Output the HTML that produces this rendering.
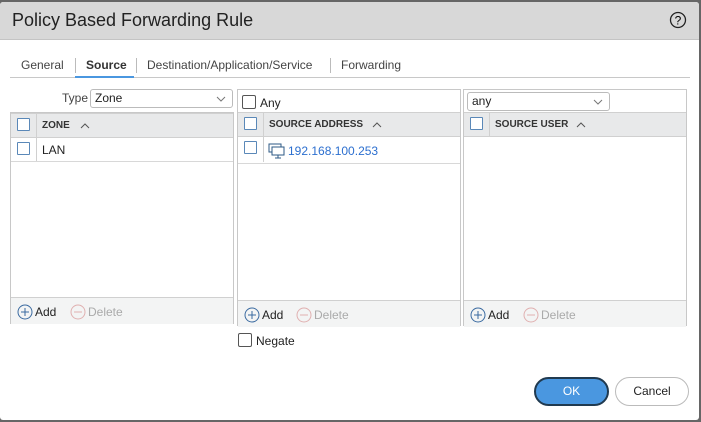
<!DOCTYPE html>
<html><head><style>
*{box-sizing:border-box;margin:0;padding:0}
body{width:701px;height:422px;background:#666;font-family:"Liberation Sans",sans-serif;position:relative;overflow:hidden;font-size:12px;color:#222}
.a{position:absolute}
.dlg{left:0;top:2px;width:699px;height:418px;background:#fff;border-radius:3px;overflow:hidden}
.tb{left:0;top:0;width:699px;height:38px;background:#d8d8d8;border-bottom:1px solid #c4c4c4}
.panel{border:1px solid #c8c8c8;background:#fff}
.hdr{background:#e8e9ea;border-bottom:1px solid #d0d0d0;border-top:1px solid #d0d0d0;height:25px}
.cb{width:13px;height:13px;border:1.5px solid #5a88b8;border-radius:1px;background:#fff}
.cbg{width:14px;height:14px;border:1px solid #555;border-radius:2px;background:#fff}
.ht{font-size:10px;font-weight:bold;letter-spacing:0px;color:#333;white-space:nowrap}
.ft{background:#f3f4f4;border-top:1px solid #d0d0d0;height:27px}
.sel{border:1px solid #bbb;border-radius:3px;background:#fff;height:19px;padding-left:4px;line-height:17px;font-size:12px}
.chev{position:absolute;right:6px;top:6px}
</style></head><body>
<div class="a dlg">
<div class="a tb"></div>
<div class="a" style="left:12px;top:8px;font-size:18px;color:#222">Policy Based Forwarding Rule</div>
<svg class="a" style="left:669px;top:9px" width="18" height="18"><circle cx="9" cy="9" r="7.5" fill="none" stroke="#222" stroke-width="1.3"/><text x="9" y="13.5" font-size="12" text-anchor="middle" font-family="Liberation Sans">?</text></svg>

<div class="a" style="left:10px;top:75px;width:680px;height:1px;background:#c8c8c8"></div>
<div class="a" style="left:75px;top:74px;width:59px;height:2px;background:#4a97e0"></div>
<div class="a" style="left:21px;top:56px;color:#444">General</div>
<div class="a" style="left:75px;top:56px;width:1px;height:15px;background:#bbb"></div>
<div class="a" style="left:86px;top:56px;font-weight:bold;color:#333">Source</div>
<div class="a" style="left:136px;top:56px;width:1px;height:15px;background:#bbb"></div>
<div class="a" style="left:147px;top:56px;color:#444">Destination/Application/Service</div>
<div class="a" style="left:330px;top:56px;width:1px;height:15px;background:#bbb"></div>
<div class="a" style="left:341px;top:56px;color:#444">Forwarding</div>

<!-- panel 1 -->
<div class="a" style="left:62px;top:89px;color:#444">Type</div>
<div class="a sel" style="left:90px;top:87px;width:143px">Zone<svg class="chev" width="10" height="6"><path d="M1 1l4 4 4-4" fill="none" stroke="#777"/></svg></div>
<div class="a panel" style="left:10px;top:110px;width:224px;height:212px">
 <div class="a hdr" style="left:0;top:0;width:222px"></div>
 <div class="a" style="left:25px;top:0;width:1px;height:48px;background:#d0d0d0"></div>
 <div class="a cb" style="left:6px;top:5px"></div>
 <div class="a ht" style="left:31px;top:7px">ZONE</div>
 <svg class="a" style="left:69px;top:9px" width="10" height="7"><path d="M1 6l4-4 4 4" fill="none" stroke="#555"/></svg>
 <div class="a cb" style="left:6px;top:29px"></div>
 <div class="a" style="left:31px;top:30px">LAN</div>
 <div class="a" style="left:0;top:48px;width:222px;height:1px;background:#d8d8d8"></div>
 <div class="a ft" style="left:0;top:184px;width:222px"></div>
 <svg class="a" style="left:6px;top:191px" width="16" height="16"><circle cx="8" cy="8" r="7" fill="none" stroke="#3a6aa0"/><path d="M8 4v8M4 8h8" stroke="#3a6aa0"/></svg>
 <div class="a" style="left:24px;top:192px">Add</div>
 <svg class="a" style="left:59px;top:191px" width="16" height="16"><circle cx="8" cy="8" r="7" fill="none" stroke="#e0b0b0"/><path d="M4 8h8" stroke="#e0b0b0"/></svg>
 <div class="a" style="left:77px;top:192px;color:#aaa">Delete</div>
</div>

<!-- panel 2 -->
<div class="a panel" style="left:237px;top:87px;width:224px;height:237px">
 <div class="a cbg" style="left:4px;top:5px"></div>
 <div class="a" style="left:22px;top:6px">Any</div>
 <div class="a hdr" style="left:0;top:22px;width:222px"></div>
 <div class="a" style="left:25px;top:22px;width:1px;height:50px;background:#d0d0d0"></div>
 <div class="a cb" style="left:6px;top:27px"></div>
 <div class="a ht" style="left:31px;top:29px">SOURCE ADDRESS</div>
 <svg class="a" style="left:134px;top:31px" width="10" height="7"><path d="M1 6l4-4 4 4" fill="none" stroke="#555"/></svg>
 <div class="a cb" style="left:6px;top:51px"></div>
 <svg class="a" style="left:30px;top:53px" width="18" height="16"><rect x="1" y="1" width="12" height="8" fill="none" stroke="#2d5a85"/><rect x="4" y="4" width="12" height="8" fill="#fff" stroke="#2d5a85"/><path d="M10 12v3M7 15h6" stroke="#2d5a85"/></svg>
 <div class="a" style="left:50px;top:54px;color:#2c6fcf">192.168.100.253</div>
 <div class="a" style="left:0;top:73px;width:222px;height:1px;background:#d8d8d8"></div>
 <div class="a ft" style="left:0;top:210px;width:222px"></div>
 <svg class="a" style="left:6px;top:217px" width="16" height="16"><circle cx="8" cy="8" r="7" fill="none" stroke="#3a6aa0"/><path d="M8 4v8M4 8h8" stroke="#3a6aa0"/></svg>
 <div class="a" style="left:24px;top:218px">Add</div>
 <svg class="a" style="left:58px;top:217px" width="16" height="16"><circle cx="8" cy="8" r="7" fill="none" stroke="#e0b0b0"/><path d="M4 8h8" stroke="#e0b0b0"/></svg>
 <div class="a" style="left:76px;top:218px;color:#aaa">Delete</div>
</div>

<!-- panel 3 -->
<div class="a panel" style="left:463px;top:87px;width:224px;height:237px">
 <div class="a sel" style="left:3px;top:2px;width:143px">any<svg class="chev" width="10" height="6"><path d="M1 1l4 4 4-4" fill="none" stroke="#777"/></svg></div>
 <div class="a hdr" style="left:0;top:22px;width:222px"></div>
 <div class="a" style="left:25px;top:22px;width:1px;height:25px;background:#d0d0d0"></div>
 <div class="a cb" style="left:6px;top:27px"></div>
 <div class="a ht" style="left:31px;top:29px">SOURCE USER</div>
 <svg class="a" style="left:112px;top:31px" width="10" height="7"><path d="M1 6l4-4 4 4" fill="none" stroke="#555"/></svg>
 <div class="a ft" style="left:0;top:210px;width:222px"></div>
 <svg class="a" style="left:6px;top:217px" width="16" height="16"><circle cx="8" cy="8" r="7" fill="none" stroke="#3a6aa0"/><path d="M8 4v8M4 8h8" stroke="#3a6aa0"/></svg>
 <div class="a" style="left:24px;top:218px">Add</div>
 <svg class="a" style="left:59px;top:217px" width="16" height="16"><circle cx="8" cy="8" r="7" fill="none" stroke="#e0b0b0"/><path d="M4 8h8" stroke="#e0b0b0"/></svg>
 <div class="a" style="left:77px;top:218px;color:#aaa">Delete</div>
</div>

<div class="a cbg" style="left:238px;top:331px"></div>
<div class="a" style="left:256px;top:332px">Negate</div>

<div class="a" style="left:534px;top:375px;width:75px;height:29px;background:#4a97e0;border:2px solid #203a50;border-radius:15px;color:#fff;text-align:center;line-height:25px">OK</div>
<div class="a" style="left:615px;top:375px;width:74px;height:29px;background:#fff;border:1px solid #bbb;border-radius:15px;text-align:center;line-height:27px">Cancel</div>
</div>
</body></html>
